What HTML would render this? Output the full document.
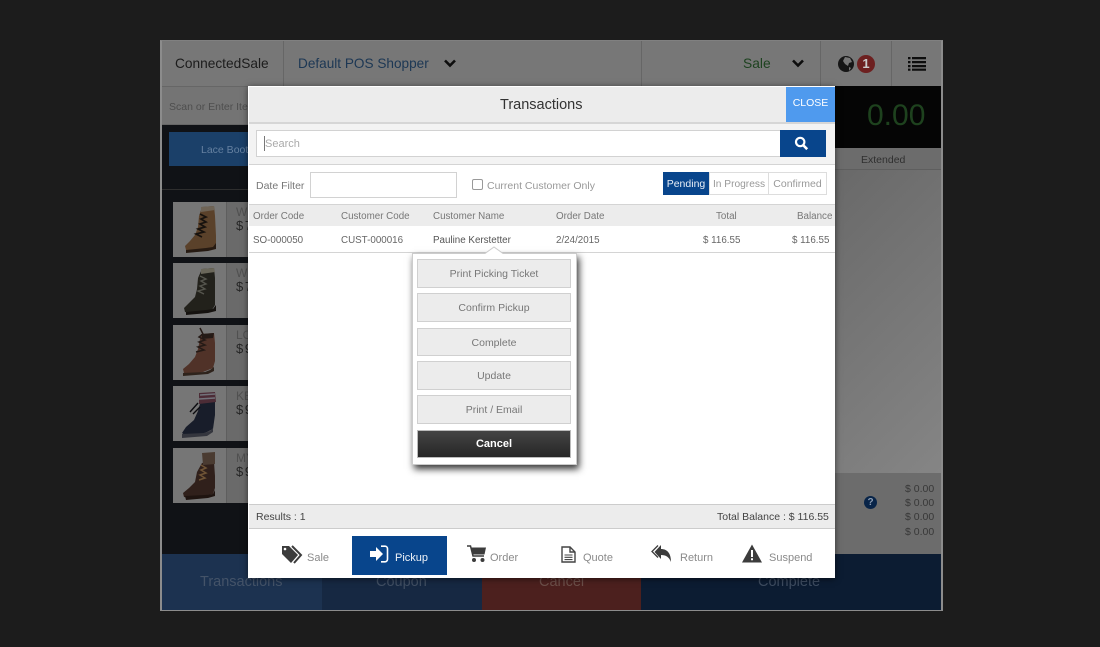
<!DOCTYPE html>
<html><head><meta charset="utf-8"><style>
html,body{margin:0;padding:0}
body{width:1100px;height:647px;background:#1c1c1c;position:relative;overflow:hidden;font-family:"Liberation Sans",sans-serif;color:#555}
div,span,svg{position:absolute;box-sizing:border-box}
.t{white-space:nowrap;line-height:14px}
.btn{left:417px;width:154px;height:29px;background:#ececec;border:1px solid #d0d0d0;text-align:center;font-size:10.5px;line-height:29px;color:#777}
.card{left:173px;width:216px;height:55px;background:#6a6a6a}
.th{left:0;width:54px;height:55px;background:#767676;border-right:1px solid #5e5e5e}
.nm{left:63px;top:3px;font-size:12px;color:#505050;line-height:14px;white-space:nowrap}
.pr{left:63px;top:16px;font-size:13px;color:#262626;line-height:16px;white-space:nowrap;word-spacing:-2px}
.h{top:211px;font-size:9.8px;color:#777;line-height:12px;white-space:nowrap}
.r{top:235px;font-size:9.8px;color:#666;line-height:12px;white-space:nowrap}
.f{font-size:11px;color:#8a8a8a;line-height:14px;white-space:nowrap;top:551px}
</style></head><body>
<!-- app -->
<div style="left:160px;top:40px;width:783px;height:571px;background:#767676;border:2px solid #8c8c8c;border-top:1px solid #808080"></div>
<div style="left:162px;top:41px;width:779px;height:45px;background:#777"></div>
<div style="left:283px;top:41px;width:1px;height:45px;background:#666"></div>
<div style="left:641px;top:41px;width:1px;height:45px;background:#666"></div>
<div style="left:820px;top:41px;width:1px;height:45px;background:#666"></div>
<div style="left:891px;top:41px;width:1px;height:45px;background:#666"></div>
<div class="t" style="left:175px;top:57px;font-size:13.700px;color:#1c1c1c">ConnectedSale</div>
<div class="t" style="left:298px;top:57px;font-size:13.600px;color:#1c3754">Default POS Shopper</div>
<svg style="left:443px;top:58px" width="14" height="11" viewBox="0 0 14 11"><path d="M2 2.500l5 5 5-5" fill="none" stroke="#0d0d0d" stroke-width="2.600"/></svg>
<div class="t" style="left:743px;top:57px;font-size:13.800px;color:#1d421f">Sale</div>
<svg style="left:791px;top:58px" width="14" height="11" viewBox="0 0 14 11"><path d="M2 2.500l5 5 5-5" fill="none" stroke="#0d0d0d" stroke-width="2.600"/></svg>
<svg style="left:837px;top:55px" width="18" height="18" viewBox="0 0 18 18"><circle cx="9" cy="9" r="8" fill="#161616"/><path d="M8 2l5 1 2 4-3 1-1 3-3-2-2-3zM12 12l2 1-2 3z" fill="#777"/></svg>
<div style="left:857px;top:55px;width:18px;height:18px;border-radius:50%;background:#6d2020;color:#ccc;font-size:13px;font-weight:bold;text-align:center;line-height:18px">1</div>
<svg style="left:908px;top:56px" width="18" height="15" viewBox="0 0 18 15"><path d="M0 1h2.500v2.200H0zM4 1h14v2.200H4zM0 5h2.500v2.200H0zM4 5h14v2.200H4zM0 9h2.500v2.200H0zM4 9h14v2.200H4zM0 12.600h2.500v2.200H0zM4 12.600h14v2.200H4z" fill="#0d0d0d"/></svg>
<!-- scan row -->
<div style="left:162px;top:86px;width:86px;height:39px;background:#747474;border-top:1px solid #666;border-bottom:1px solid #666"></div>
<div class="t" style="left:169px;top:100px;width:79px;overflow:hidden;font-size:10.500px;color:#4e4e4e">Scan or Enter Item</div>
<!-- left dark -->
<div style="left:162px;top:125px;width:86px;height:429px;background:#101216"></div>
<div style="left:169px;top:132px;width:79px;height:34px;background:#1b4069"></div>
<div class="t" style="left:201px;top:143px;font-size:10.500px;color:#6580a0">Lace Boots</div>
<div style="left:162px;top:189px;width:86px;height:1px;background:#2e2e2e"></div>
<div class="card" style="top:202px"><div class="th"></div><div class="nm">WI</div><div class="pr">$ 7</div></div>
<div class="card" style="top:263px"><div class="th"></div><div class="nm">WI</div><div class="pr">$ 7</div></div>
<div class="card" style="top:325px"><div class="th"></div><div class="nm">LO</div><div class="pr">$ 9</div></div>
<div class="card" style="top:386px"><div class="th"></div><div class="nm">KE</div><div class="pr">$ 9</div></div>
<div class="card" style="top:448px"><div class="th"></div><div class="nm">MY</div><div class="pr">$ 9</div></div>
<!-- boots -->
<svg style="left:173px;top:202px" width="54" height="55" viewBox="0 0 54 55"><path d="M29 5l12-1 1 10 1 20 0 8-3 4-6 1-6 2-9 0-6-1-1-4 5-5 5-6 3-8 1-11z" fill="#5a412a"/><path d="M28 5l13-1 1 4-14 2z" fill="#6e6355"/><path d="M27 12l6 3-5 2 5 3-6 2 5 3-7 2 6 3-8 2 6 3" fill="none" stroke="#17120e" stroke-width="1.700"/><path d="M13 48l20-2 7-1 3-4v6l-8 2-22 2z" fill="#261a12"/></svg>
<svg style="left:173px;top:263px" width="54" height="55" viewBox="0 0 54 55"><path d="M29 6l12-1 1 10 0 20 0 7-3 5-6 1-6 2-9 0-6-1-1-4 5-5 6-6 2-8 1-11z" fill="#22211b"/><path d="M28 6l13-1 1 4-14 2z" fill="#6a675a"/><path d="M27 13l6 3-5 2 5 3-6 2 5 3-7 2 6 3" fill="none" stroke="#55554d" stroke-width="1.400"/><path d="M13 49l20-2 7-1 3-4v6l-8 2-22 2z" fill="#15120f"/></svg>
<svg style="left:173px;top:325px" width="54" height="55" viewBox="0 0 54 55"><path d="M28 9l13-1 1 10 0 18-2 7-5 2-5 2-12 2-7-1-1-4 6-5 6-7 3-8z" fill="#503228"/><path d="M29 9l12-1-1 5-11 1z" fill="#241a16"/><path d="M27 3l3 6-4 3 6 3-6 2 6 3-7 2 6 3-8 2" fill="none" stroke="#241a16" stroke-width="1.500"/><path d="M10 48l22-1 5-2 4-3v4l-6 3-25 2z" fill="#2e231c"/></svg>
<svg style="left:173px;top:386px" width="54" height="55" viewBox="0 0 54 55"><path d="M28 14l14-1 0 16-2 14-6 3-8 3-13 1-4-3 4-6 8-7 4-9z" fill="#181d2a"/><path d="M26 7l16-1 1 10-17 2z" fill="#4c2c36"/><path d="M27 9l15-1M26 13l16-1" stroke="#72727a" stroke-width="1.500"/><path d="M25 17l-8 9M27 21l-7 7" stroke="#0c0c10" stroke-width="1.400"/><path d="M9 48l22-1 6-2 3-3v4l-6 4-25 2z" fill="#34363e"/></svg>
<svg style="left:173px;top:448px" width="54" height="55" viewBox="0 0 54 55"><path d="M29 15l12-1 1 14 0 12-2 6-6 1-4 2-12 1-7-1-1-4 6-5 6-6 2-10z" fill="#30201b"/><path d="M29 5l13-1 0 12-12 1z" fill="#4a3b31"/><path d="M28 17l5 3-5 2 5 3-6 2 5 3-6 2" fill="none" stroke="#6e5335" stroke-width="1.500"/><path d="M12 48l20-1 8-1 2-4v6l-7 2-22 2z" fill="#1f1410"/></svg>
<!-- right side -->
<div style="left:835px;top:86px;width:106px;height:62px;background:#050505"></div>
<div class="t" style="left:867px;top:100px;font-size:30px;line-height:32px;color:#1e421e">0.00</div>
<div style="left:835px;top:148px;width:106px;height:22px;background:#6c6c6c;border-bottom:1px solid #5e5e5e"></div>
<div class="t" style="left:861px;top:153px;font-size:10.500px;color:#303030">Extended</div>
<div style="left:835px;top:170px;width:106px;height:303px;background:linear-gradient(135deg,#696969,#858585)"></div>
<div style="left:835px;top:473px;width:106px;height:81px;background:#6c6c6c"></div>
<div style="left:864px;top:496px;width:13px;height:13px;border-radius:50%;background:#082448;color:#8b9cb2;font-size:10px;font-weight:bold;text-align:center;line-height:13px">?</div>
<div class="t" style="left:905px;top:482px;font-size:10.500px;color:#383838">$ 0.00</div>
<div class="t" style="left:905px;top:496px;font-size:10.500px;color:#383838">$ 0.00</div>
<div class="t" style="left:905px;top:510px;font-size:10.500px;color:#383838">$ 0.00</div>
<div class="t" style="left:905px;top:525px;font-size:10.500px;color:#383838">$ 0.00</div>
<!-- bottom buttons -->
<div style="left:162px;top:554px;width:160px;height:56px;background:#1c3250"></div>
<div style="left:322px;top:554px;width:160px;height:56px;background:#162842"></div>
<div style="left:482px;top:554px;width:160px;height:56px;background:#4c201e"></div>
<div style="left:641px;top:554px;width:300px;height:56px;background:#0c1c32"></div>
<div class="t" style="left:200px;top:575px;font-size:14.500px;color:#445368">Transactions</div>
<div class="t" style="left:376px;top:575px;font-size:14.500px;color:#404e62">Coupon</div>
<div class="t" style="left:539px;top:575px;font-size:14.500px;color:#6c4f49">Cancel</div>
<div class="t" style="left:758px;top:575px;font-size:14.500px;color:#3e4c60">Complete</div>
<!-- modal -->
<div style="left:248px;top:86px;width:587px;height:492px;background:#fff;box-shadow:0 1px 6px rgba(0,0,0,.55)"></div>
<div style="left:249px;top:87px;width:537px;height:35px;background:#ececec"></div>
<div style="left:249px;top:122px;width:586px;height:2px;background:#d6d6d6"></div>
<div class="t" style="left:500px;top:97px;font-size:14.500px;line-height:17px;color:#333">Transactions</div>
<div style="left:786px;top:87px;width:49px;height:35px;background:#4f9aee;color:#fff;font-size:10.500px;text-align:center;line-height:33px">CLOSE</div>
<div style="left:249px;top:124px;width:586px;height:41px;background:#f3f3f3;border-bottom:1px solid #d4d4d4"></div>
<div style="left:256px;top:130px;width:525px;height:27px;background:#fff;border:1px solid #d2d2d2"></div>
<div style="left:264px;top:136px;width:1px;height:15px;background:#777"></div>
<div class="t" style="left:265px;top:137px;font-size:11px;color:#aaa">Search</div>
<div style="left:780px;top:130px;width:46px;height:27px;background:#08458c"></div>
<svg style="left:794px;top:136px" width="15" height="15" viewBox="0 0 15 15"><circle cx="6.200" cy="6" r="4.200" fill="none" stroke="#fff" stroke-width="2.200"/><path d="M9.500 9.500l3.700 3.700" stroke="#fff" stroke-width="2.600"/></svg>
<div class="t" style="left:256px;top:179px;font-size:10.500px;color:#777">Date Filter</div>
<div style="left:310px;top:172px;width:147px;height:26px;background:#fff;border:1px solid #d2d2d2"></div>
<div style="left:472px;top:179px;width:11px;height:11px;background:#fff;border:1px solid #999;border-radius:2px"></div>
<div class="t" style="left:487px;top:179px;font-size:10.500px;color:#999">Current Customer Only</div>
<div style="left:663px;top:172px;width:46px;height:23px;background:#08458c;color:#e8eef6;font-size:10.500px;text-align:center;line-height:25px">Pending</div>
<div style="left:709px;top:172px;width:60px;height:23px;background:#fff;border:1px solid #ddd;color:#999;font-size:10.200px;text-align:center;line-height:23px">In Progress</div>
<div style="left:768px;top:172px;width:59px;height:23px;background:#fff;border:1px solid #ddd;color:#999;font-size:10.500px;text-align:center;line-height:23px">Confirmed</div>
<div style="left:249px;top:204px;width:586px;height:22px;background:#ececec;border-top:1px solid #d4d4d4"></div>
<div style="left:249px;top:252px;width:586px;height:1px;background:#d4d4d4"></div>
<div class="h" style="left:253px">Order Code</div><div class="h" style="left:341px">Customer Code</div><div class="h" style="left:433px">Customer Name</div><div class="h" style="left:556px">Order Date</div><div class="h" style="left:716px">Total</div><div class="h" style="left:797px">Balance</div>
<div class="r" style="left:253px">SO-000050</div><div class="r" style="left:341px">CUST-000016</div><div class="r" style="left:433px;color:#555">Pauline Kerstetter</div><div class="r" style="left:556px">2/24/2015</div><div class="r" style="left:703px">$ 116.55</div><div class="r" style="left:792px">$ 116.55</div>
<!-- popup -->
<div style="left:412px;top:253px;width:165px;height:212px;background:#fff;border:1px solid #ccc;box-shadow:2px 4px 7px rgba(0,0,0,.8)"></div>
<svg style="left:485px;top:246px" width="18" height="9" viewBox="0 0 18 9"><path d="M0 8L9 1l9 7z" fill="#fff"/><path d="M0 7.500L9 1l9 6.500" fill="none" stroke="#ccc"/></svg>
<div class="btn" style="top:259px">Print Picking Ticket</div>
<div class="btn" style="top:293px">Confirm Pickup</div>
<div class="btn" style="top:328px;height:28px;line-height:28px">Complete</div>
<div class="btn" style="top:361px">Update</div>
<div class="btn" style="top:395px">Print / Email</div>
<div style="left:417px;top:430px;width:154px;height:28px;background:linear-gradient(#444,#262626);border:1px solid #bbb;color:#fff;font-size:11px;font-weight:bold;text-align:center;line-height:26px">Cancel</div>
<!-- footer -->
<div style="left:249px;top:504px;width:586px;height:25px;background:#ececec;border-top:1px solid #ccc;border-bottom:1px solid #ccc"></div>
<div class="t" style="left:256px;top:510px;font-size:10.500px;color:#444">Results : 1</div>
<div class="t" style="left:717px;top:510px;font-size:10.500px;color:#444">Total Balance : $ 116.55</div>
<svg style="left:281px;top:545px" width="23" height="19" viewBox="0 0 23 19"><path d="M1 1h7l9 9-7 8-9-9z" fill="#3c3c3c"/><circle cx="4" cy="4" r="1.300" fill="#fff"/><path d="M11 1l9 9-7 8" fill="none" stroke="#3c3c3c" stroke-width="2"/></svg>
<div class="f" style="left:307px">Sale</div>
<div style="left:352px;top:536px;width:95px;height:39px;background:#08458c"></div>
<svg style="left:369px;top:545px" width="20" height="18" viewBox="0 0 20 18"><path d="M1 6h6V2l7 7-7 7v-4H1z" fill="#fff"/><path d="M12 1.200h4a2.500 2.500 0 0 1 2.500 2.500v10.600a2.500 2.500 0 0 1-2.500 2.500h-4" fill="none" stroke="#fff" stroke-width="1.600"/></svg>
<div class="f" style="left:395px;color:#eef2f8">Pickup</div>
<svg style="left:467px;top:545px" width="20" height="18" viewBox="0 0 20 18"><path d="M0 1h3.500l2.500 10h11" fill="none" stroke="#3c3c3c" stroke-width="1.500"/><path d="M4 2.500h15l-1.500 7H5.500z" fill="#3c3c3c"/><circle cx="7" cy="15" r="2" fill="#3c3c3c"/><circle cx="15.500" cy="15" r="2" fill="#3c3c3c"/></svg>
<div class="f" style="left:490px">Order</div>
<svg style="left:561px;top:546px" width="15" height="17" viewBox="0 0 15 17"><path d="M1 1h8l5 5v10H1z" fill="#fff" stroke="#444" stroke-width="1.400"/><path d="M9 1v5h5" fill="none" stroke="#444" stroke-width="1.400"/><path d="M3.500 9h8M3.500 11.300h8M3.500 13.600h8" stroke="#444" stroke-width="1.100"/></svg>
<div class="f" style="left:583px">Quote</div>
<svg style="left:651px;top:544px" width="21" height="19" viewBox="0 0 21 19"><path d="M10 1v4c6 0 10 4 10 13-2-5-5-7-10-7v4L3.500 8z" fill="#3c3c3c"/><path d="M7 1.500L1 7.500l6 6" fill="none" stroke="#3c3c3c" stroke-width="1.300"/></svg>
<div class="f" style="left:680px">Return</div>
<svg style="left:742px;top:544px" width="20" height="19" viewBox="0 0 20 19"><path d="M10 0.500L20 18.500H0z" fill="#3c3c3c"/><path d="M9 6h2v7H9zM9 14.300h2v2H9z" fill="#fff"/></svg>
<div class="f" style="left:769px">Suspend</div>
</body></html>
